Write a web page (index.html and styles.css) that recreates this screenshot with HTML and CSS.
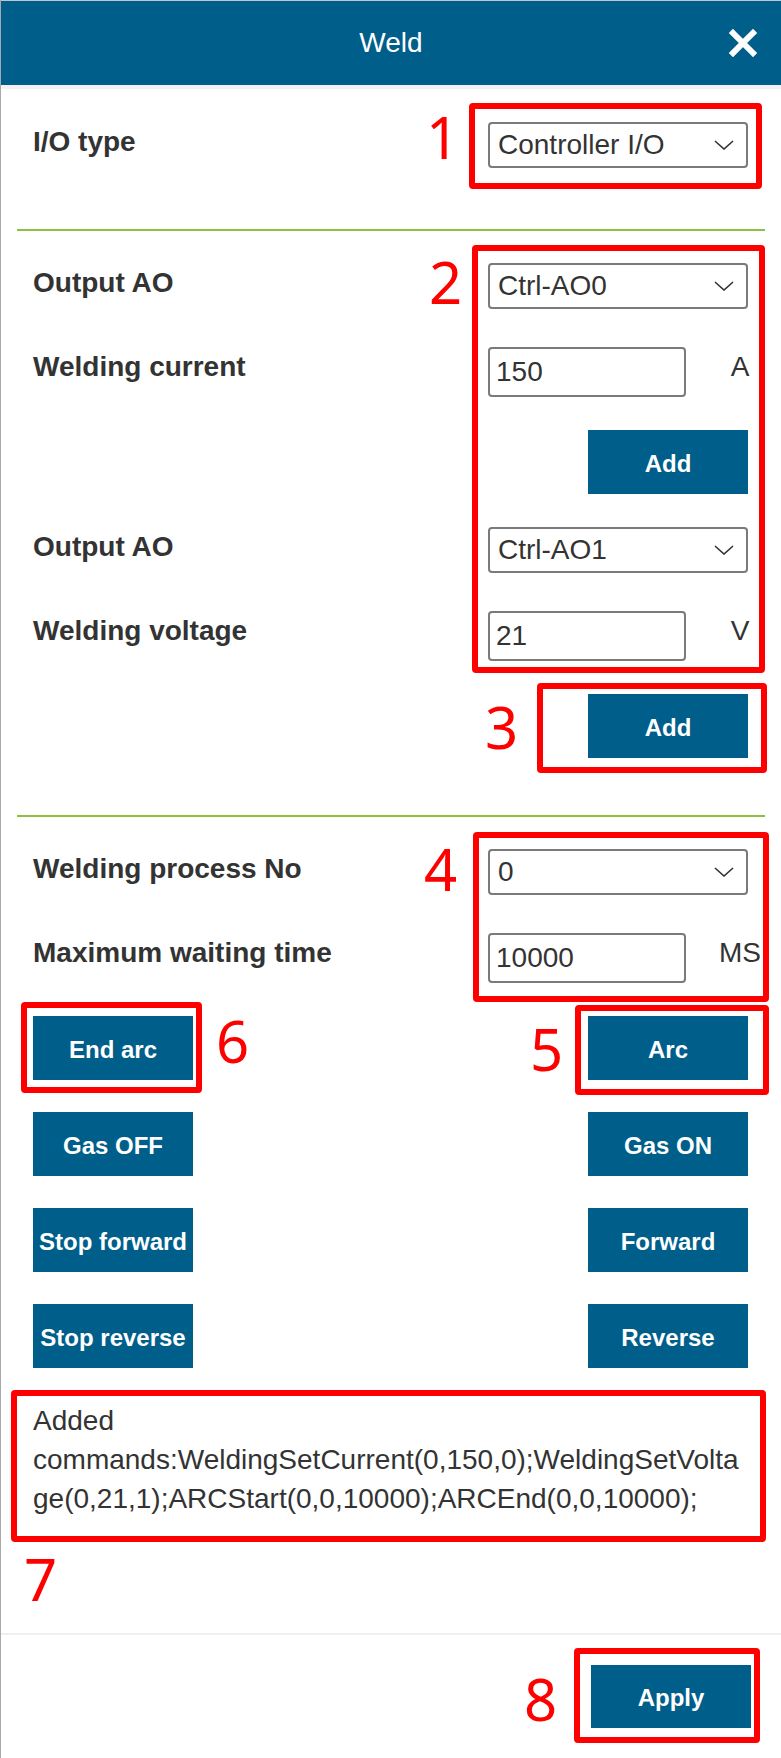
FILE: index.html
```html
<!DOCTYPE html>
<html lang="en">
<head>
<meta charset="utf-8">
<title>Weld</title>
<link rel="stylesheet" href="styles.css">
</head>
<body>
<div class="modal">
  <header class="head">
    <h1 class="title">Weld</h1>
    <button class="close" aria-label="Close">
      <svg width="28" height="28" viewBox="0 0 28 28"><path d="M4 4 L24 24 M24 4 L4 24" stroke="#fff" stroke-width="6" stroke-linecap="square" fill="none"/></svg>
    </button>
  </header>

  <section class="sec sec-io">
    <div class="row row-sel">
      <span class="lbl">I/O type</span>
      <div class="ctl"><div class="select"><span>Controller I/O</span><svg class="chev" width="20" height="10" viewBox="0 0 20 10"><path d="M1 1 L10 9 L19 1" stroke="#333" stroke-width="1.6" fill="none"/></svg></div></div>
    </div>
  </section>

  <hr class="sep">

  <section class="sec sec-out">
    <div class="row row-sel">
      <span class="lbl">Output AO</span>
      <div class="ctl"><div class="select"><span>Ctrl-AO0</span><svg class="chev" width="20" height="10" viewBox="0 0 20 10"><path d="M1 1 L10 9 L19 1" stroke="#333" stroke-width="1.6" fill="none"/></svg></div></div>
    </div>
    <div class="row">
      <span class="lbl">Welding current</span>
      <div class="ctl"><div class="input">150</div><span class="unit">A</span></div>
    </div>
    <div class="add-row"><button class="btn">Add</button></div>
    <div class="row row-sel">
      <span class="lbl">Output AO</span>
      <div class="ctl"><div class="select"><span>Ctrl-AO1</span><svg class="chev" width="20" height="10" viewBox="0 0 20 10"><path d="M1 1 L10 9 L19 1" stroke="#333" stroke-width="1.6" fill="none"/></svg></div></div>
    </div>
    <div class="row">
      <span class="lbl">Welding voltage</span>
      <div class="ctl"><div class="input">21</div><span class="unit">V</span></div>
    </div>
    <div class="add-row"><button class="btn">Add</button></div>
  </section>

  <hr class="sep">

  <section class="sec sec-arc">
    <div class="row row-sel">
      <span class="lbl">Welding process No</span>
      <div class="ctl"><div class="select"><span>0</span><svg class="chev" width="20" height="10" viewBox="0 0 20 10"><path d="M1 1 L10 9 L19 1" stroke="#333" stroke-width="1.6" fill="none"/></svg></div></div>
    </div>
    <div class="row">
      <span class="lbl">Maximum waiting time</span>
      <div class="ctl"><div class="input">10000</div><span class="unit">MS</span></div>
    </div>
    <div class="btn-grid">
      <button class="btn">End arc</button>
      <button class="btn">Arc</button>
      <button class="btn">Gas OFF</button>
      <button class="btn">Gas ON</button>
      <button class="btn">Stop forward</button>
      <button class="btn">Forward</button>
      <button class="btn">Stop reverse</button>
      <button class="btn">Reverse</button>
    </div>
    <p class="log">Added commands:WeldingSetCurrent(0,150,0);WeldingSetVoltage(0,21,1);ARCStart(0,0,10000);ARCEnd(0,0,10000);</p>
  </section>

  <footer class="foot">
    <button class="btn btn-apply">Apply</button>
  </footer>

  <div class="box b1"></div><span class="num n1">1</span>
  <div class="box b2"></div><span class="num n2">2</span>
  <div class="box b3"></div><span class="num n3">3</span>
  <div class="box b4"></div><span class="num n4">4</span>
  <div class="box b5"></div><span class="num n5">5</span>
  <div class="box b6"></div><span class="num n6">6</span>
  <div class="box b7"></div><span class="num n7">7</span>
  <div class="box b8"></div><span class="num n8">8</span>
</div>
</body>
</html>
```

FILE: styles.css
```css
* { box-sizing: border-box; }
html, body { margin: 0; padding: 0; }
body {
  font-family: "Liberation Sans", Arial, sans-serif;
  color: #333;
  background: #fff;
}
.modal {
  position: relative;
  width: 781px;
  min-height: 1758px;
  border-left: 1px solid #a9a9a9;
  overflow: hidden;
}
.head {
  height: 89px;
  background: #005e8a;
  border-top: 1px solid #c4c4c4;
  border-bottom: 4px solid #f2f2f2;
  display: grid;
  grid-template-columns: 1fr auto 1fr;
  align-items: center;
}
.title {
  grid-column: 2;
  margin: 0;
  font-size: 28px;
  font-weight: 400;
  line-height: 40px;
  color: #fff;
}
.close {
  grid-column: 3;
  justify-self: end;
  margin-right: 24px;
  width: 28px;
  height: 28px;
  padding: 0;
  border: 0;
  background: none;
  display: flex;
}
.sec { padding: 0 33px 0 32px; }
.sec-io { padding-top: 33px; padding-bottom: 61px; }
.sec-out {
  padding-top: 32px;
  padding-bottom: 57px;
  display: flex;
  flex-direction: column;
  gap: 33px;
}
.sec-arc {
  padding-top: 32px;
  padding-bottom: 115px;
  display: flex;
  flex-direction: column;
  gap: 33px;
}
.sep {
  height: 2px;
  margin: 0 16px;
  border: 0;
  background: #8cc041;
}
.row {
  display: flex;
  align-items: flex-start;
  justify-content: space-between;
}
.row-sel { margin-bottom: 5px; }
.sec-io .row-sel { margin-bottom: 0; }
.lbl {
  font-size: 28px;
  font-weight: 700;
  line-height: 40px;
  white-space: nowrap;
}
.ctl {
  flex: none;
  width: 260px;
  display: flex;
  align-items: flex-start;
}
.select {
  width: 260px;
  height: 46px;
  border: 2px solid #7a7a7a;
  border-radius: 4px;
  display: flex;
  align-items: center;
  justify-content: space-between;
  padding: 0 12px 0 8px;
  font-size: 28px;
  color: #333;
}
.chev { flex: none; }
.input {
  width: 198px;
  height: 50px;
  flex: none;
  border: 2px solid #7a7a7a;
  border-radius: 4px;
  display: flex;
  align-items: center;
  padding-left: 6px;
  font-size: 28px;
  color: #333;
}
.unit {
  flex: none;
  margin-left: 24px;
  width: 60px;
  text-align: center;
  font-size: 28px;
  line-height: 40px;
}
.add-row {
  display: flex;
  justify-content: flex-end;
}
.btn {
  width: 160px;
  height: 64px;
  padding: 3px 0 0;
  border: 0;
  border-radius: 0;
  background: #005e8a;
  color: #fff;
  font-family: "Liberation Sans", Arial, sans-serif;
  font-size: 24px;
  font-weight: 700;
  white-space: nowrap;
}
.btn-grid {
  display: grid;
  grid-template-columns: 160px 160px;
  justify-content: space-between;
  row-gap: 32px;
}
.log {
  margin: 0;
  font-size: 28px;
  line-height: 39px;
  overflow-wrap: break-word;
}
.foot {
  border-top: 2px solid #efefef;
  padding: 30px 30px 30px 0;
  display: flex;
  justify-content: flex-end;
}
.btn-apply { height: 63px; }

/* annotation overlay */
.box {
  position: absolute;
  border: 6px solid #ff0000;
  border-radius: 4px;
}
.num {
  position: absolute;
  font-family: "Noto Sans", sans-serif;
  font-size: 58px;
  line-height: 58px;
  color: #ff0000;
}
.b1 { left: 468px; top: 103px; width: 293px; height: 86px; }
.b2 { left: 471px; top: 245px; width: 293px; height: 428px; }
.b3 { left: 536px; top: 683px; width: 230px; height: 90px; }
.b4 { left: 472px; top: 832px; width: 296px; height: 170px; }
.b5 { left: 574px; top: 1005px; width: 194px; height: 90px; }
.b6 { left: 20px; top: 1002px; width: 181px; height: 91px; }
.b7 { left: 10px; top: 1390px; width: 755px; height: 152px; }
.b8 { left: 573px; top: 1648px; width: 186px; height: 95px; }
.n1 { left: 425px; top: 108px; }
.n2 { left: 428px; top: 253px; }
.n3 { left: 484px; top: 698px; }
.n4 { left: 423px; top: 840px; }
.n5 { left: 529px; top: 1020px; }
.n6 { left: 215px; top: 1012px; }
.n7 { left: 23px; top: 1550px; }
.n8 { left: 523px; top: 1670px; }
```
